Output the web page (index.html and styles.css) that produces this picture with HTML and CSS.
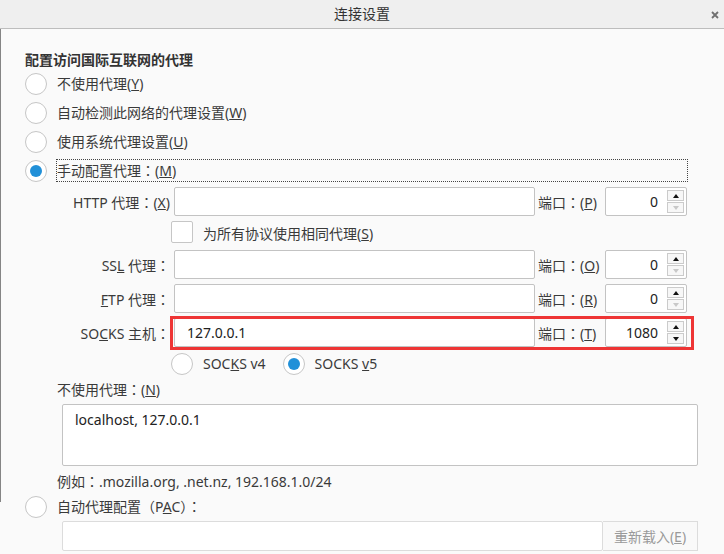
FILE: index.html
```html
<!DOCTYPE html>
<html lang="zh-CN">
<head>
  <meta charset="UTF-8" />
  <meta name="viewport" content="width=device-width, initial-scale=1.0"/>
  <title>连接设置</title>
  <link rel="stylesheet" href="styles.css">
</head>
<body>
  <div class="window">
    <div class="titlebar">
      <span class="title">连接设置</span>
      <svg class="close" width="8" height="8" viewBox="0 0 8 8">
        <path d="M1 1 L7 7 M7 1 L1 7" stroke="#707070" stroke-width="1.8" fill="none"/>
      </svg>
    </div>

    <div class="content">
      <div class="heading">配置访问国际互联网的代理</div>

      <div class="option"><span class="radio"></span><span>不使用代理(<u>Y</u>)</span></div>
      <div class="option"><span class="radio"></span><span>自动检测此网络的代理设置(<u>W</u>)</span></div>
      <div class="option"><span class="radio"></span><span>使用系统代理设置(<u>U</u>)</span></div>
      <div class="option"><span class="radio checked"></span><span class="focused">手动配置代理<span class="punct" lang="zh-TW">：</span>(<u>M</u>)</span></div>

      <div class="proxies">
        <div class="proxy-row">
          <span class="proxy-label">HTTP 代理<span class="punct" lang="zh-TW">：</span>(<u>X</u>)</span>
          <div class="field host"></div>
          <span class="port-label">端口<span class="punct" lang="zh-TW">：</span>(<u>P</u>)</span>
          <div class="field port">
            <span class="port-value">0</span>
            <span class="spin"><span class="up"></span><span class="down off"></span></span>
          </div>
        </div>

        <div class="share-row">
          <span class="checkbox"></span>
          <span>为所有协议使用相同代理(<u>S</u>)</span>
        </div>

        <div class="proxy-row">
          <span class="proxy-label">SS<u>L</u> 代理<span class="punct" lang="zh-TW">：</span></span>
          <div class="field host"></div>
          <span class="port-label">端口<span class="punct" lang="zh-TW">：</span>(<u>O</u>)</span>
          <div class="field port">
            <span class="port-value">0</span>
            <span class="spin"><span class="up"></span><span class="down off"></span></span>
          </div>
        </div>

        <div class="proxy-row">
          <span class="proxy-label"><u>F</u>TP 代理<span class="punct" lang="zh-TW">：</span></span>
          <div class="field host"></div>
          <span class="port-label">端口<span class="punct" lang="zh-TW">：</span>(<u>R</u>)</span>
          <div class="field port">
            <span class="port-value">0</span>
            <span class="spin"><span class="up"></span><span class="down off"></span></span>
          </div>
        </div>

        <div class="proxy-row highlight">
          <span class="proxy-label">SO<u>C</u>KS 主机<span class="punct" lang="zh-TW">：</span></span>
          <div class="field host"><span class="host-value">127.0.0.1</span></div>
          <span class="port-label">端口<span class="punct" lang="zh-TW">：</span>(<u>T</u>)</span>
          <div class="field port">
            <span class="port-value">1080</span>
            <span class="spin"><span class="up"></span><span class="down"></span></span>
          </div>
        </div>

        <div class="socks-version">
          <span class="radio"></span><span class="version-text">SOC<u>K</u>S v4</span>
          <span class="radio checked"></span><span class="version-text">SOCKS <u>v</u>5</span>
        </div>
      </div>

      <div class="noproxy-label">不使用代理<span class="punct" lang="zh-TW">：</span>(<u>N</u>)</div>
      <div class="field noproxy">localhost, 127.0.0.1</div>
      <div class="example">例如<span class="punct" lang="zh-TW">：</span>.mozilla.org, .net.nz, 192.168.1.0/24</div>

      <div class="option"><span class="radio"></span><span>自动代理配置<span class="punct" lang="zh-TW">（</span>P<u>A</u>C<span class="punct" lang="zh-TW">）：</span></span></div>
      <div class="pac-row">
        <div class="field pac"></div>
        <div class="reload">重新载入(<u>E</u>)</div>
      </div>
    </div>
  </div>
</body>
</html>
```

FILE: styles.css
```css
:root {
  --text: #3a3a3a;
  --border: #c3c3c3;
  --blue: #2190d8;
  --bg: #fafafa;
}

html, body {
  margin: 0;
  height: 100%;
}

body {
  font-family: "Noto Sans", "Noto Sans CJK SC", sans-serif;
  font-size: 14px;
  color: var(--text);
  background: var(--bg);
  overflow: hidden;
}

/* full-width punctuation sits centred in the cell, like the original font */
.punct {
  font-family: "Noto Sans CJK TC", sans-serif;
}

.window {
  position: relative;
  height: 100%;
}

.window::before {
  content: "";
  position: absolute;
  left: 0;
  top: 0;
  width: 1px;
  height: 502px;
  background: #858585;
}

.titlebar {
  height: 28px;
  border-bottom: 1px solid #bdbdbd;
  background: #efefef;
  display: flex;
  align-items: center;
  justify-content: center;
  position: relative;
}

.title {
  color: #333;
  line-height: 28px;
}

.close {
  position: absolute;
  right: 5px;
  top: 11px;
}

.content {
  padding: 21px 0 0 25px;
}

.heading {
  font-weight: bold;
  color: #333;
  line-height: 19px;
  height: 19px;
}

.option {
  display: flex;
  align-items: center;
  height: 29px;
  gap: 10px;
  line-height: 20px;
}

.radio {
  width: 22px;
  height: 22px;
  box-sizing: border-box;
  border: 1px solid #c6c6c6;
  border-radius: 50%;
  background: #fff;
  display: flex;
  align-items: center;
  justify-content: center;
  flex: none;
}

.radio.checked::after {
  content: "";
  width: 12px;
  height: 12px;
  border-radius: 50%;
  background: var(--blue);
}

.focused {
  width: 632px;
  height: 23px;
  box-sizing: border-box;
  border: 1px dotted #444;
  margin-left: -1px;
  line-height: 21px;
}

.proxies {
  margin-left: 32px;
  padding-top: 2px;
}

.proxy-row {
  display: flex;
  align-items: center;
  width: 630px;
  height: 29px;
  margin-bottom: 5px;
  position: relative;
}

.proxy-row.highlight::after {
  content: "";
  position: absolute;
  left: 113px;
  right: -7px;
  top: -2px;
  bottom: -3px;
  border: 3px solid #ee3535;
  pointer-events: none;
}

.proxy-label {
  width: 117px;
  box-sizing: border-box;
  padding-right: 4px;
  text-align: right;
  flex: none;
}

.field {
  background: #fff;
  border: 1px solid var(--border);
  border-radius: 2px;
  box-sizing: border-box;
}

.host {
  width: 361px;
  height: 29px;
  flex: none;
  display: flex;
  align-items: center;
  padding-left: 12px;
  color: #222;
}

.port-label {
  width: 70px;
  box-sizing: border-box;
  padding-left: 3px;
  flex: none;
}

.port {
  width: 82px;
  height: 29px;
  flex: none;
  display: flex;
  align-items: center;
  justify-content: flex-end;
  padding-right: 2px;
  color: #222;
}

.port-value {
  margin-right: 9px;
}

.spin {
  display: flex;
  flex-direction: column;
  gap: 1px;
}

.spin span {
  width: 17px;
  height: 11px;
  box-sizing: border-box;
  border: 1px solid #cbcbcb;
  background: #f7f7f7;
  display: flex;
  align-items: center;
  justify-content: center;
}

.spin .up::after,
.spin .down::after {
  content: "";
  width: 0;
  height: 0;
  border-left: 3px solid transparent;
  border-right: 3px solid transparent;
}

.spin .up::after {
  border-bottom: 4px solid #111;
}

.spin .down::after {
  border-top: 4px solid #111;
}

.spin .down.off::after {
  border-top-color: #c8c8c8;
}

.share-row {
  display: flex;
  align-items: center;
  gap: 10px;
  height: 24px;
  margin-left: 114px;
  margin-bottom: 5px;
}

.checkbox {
  width: 22px;
  height: 22px;
  box-sizing: border-box;
  border: 1px solid #c6c6c6;
  border-radius: 2px;
  background: #fff;
  align-self: flex-start;
}

.socks-version {
  display: flex;
  align-items: center;
  height: 29px;
  margin-top: -3px;
  margin-left: 114px;
}

.version-text {
  margin-left: 10px;
  margin-right: 17px;
}

.noproxy-label {
  margin-left: 32px;
  margin-top: 1px;
  line-height: 20px;
}

.noproxy {
  margin: 4px 0 0 37px;
  width: 636px;
  height: 62px;
  padding: 5px 12px;
  line-height: 20px;
  color: #222;
}

.example {
  margin: 6px 0 0 32px;
  line-height: 18px;
}

.example + .option {
  margin-top: 1px;
}

.pac-row {
  display: flex;
  margin-left: 37px;
  height: 30px;
}

.pac {
  width: 541px;
  height: 30px;
  border-color: #dcdcdc;
}

.reload {
  width: 95px;
  height: 30px;
  box-sizing: border-box;
  border: 1px solid #dcdcdc;
  border-left: none;
  background: #f9f9f9;
  color: #9a9a9a;
  display: flex;
  align-items: center;
  justify-content: center;
}
```
